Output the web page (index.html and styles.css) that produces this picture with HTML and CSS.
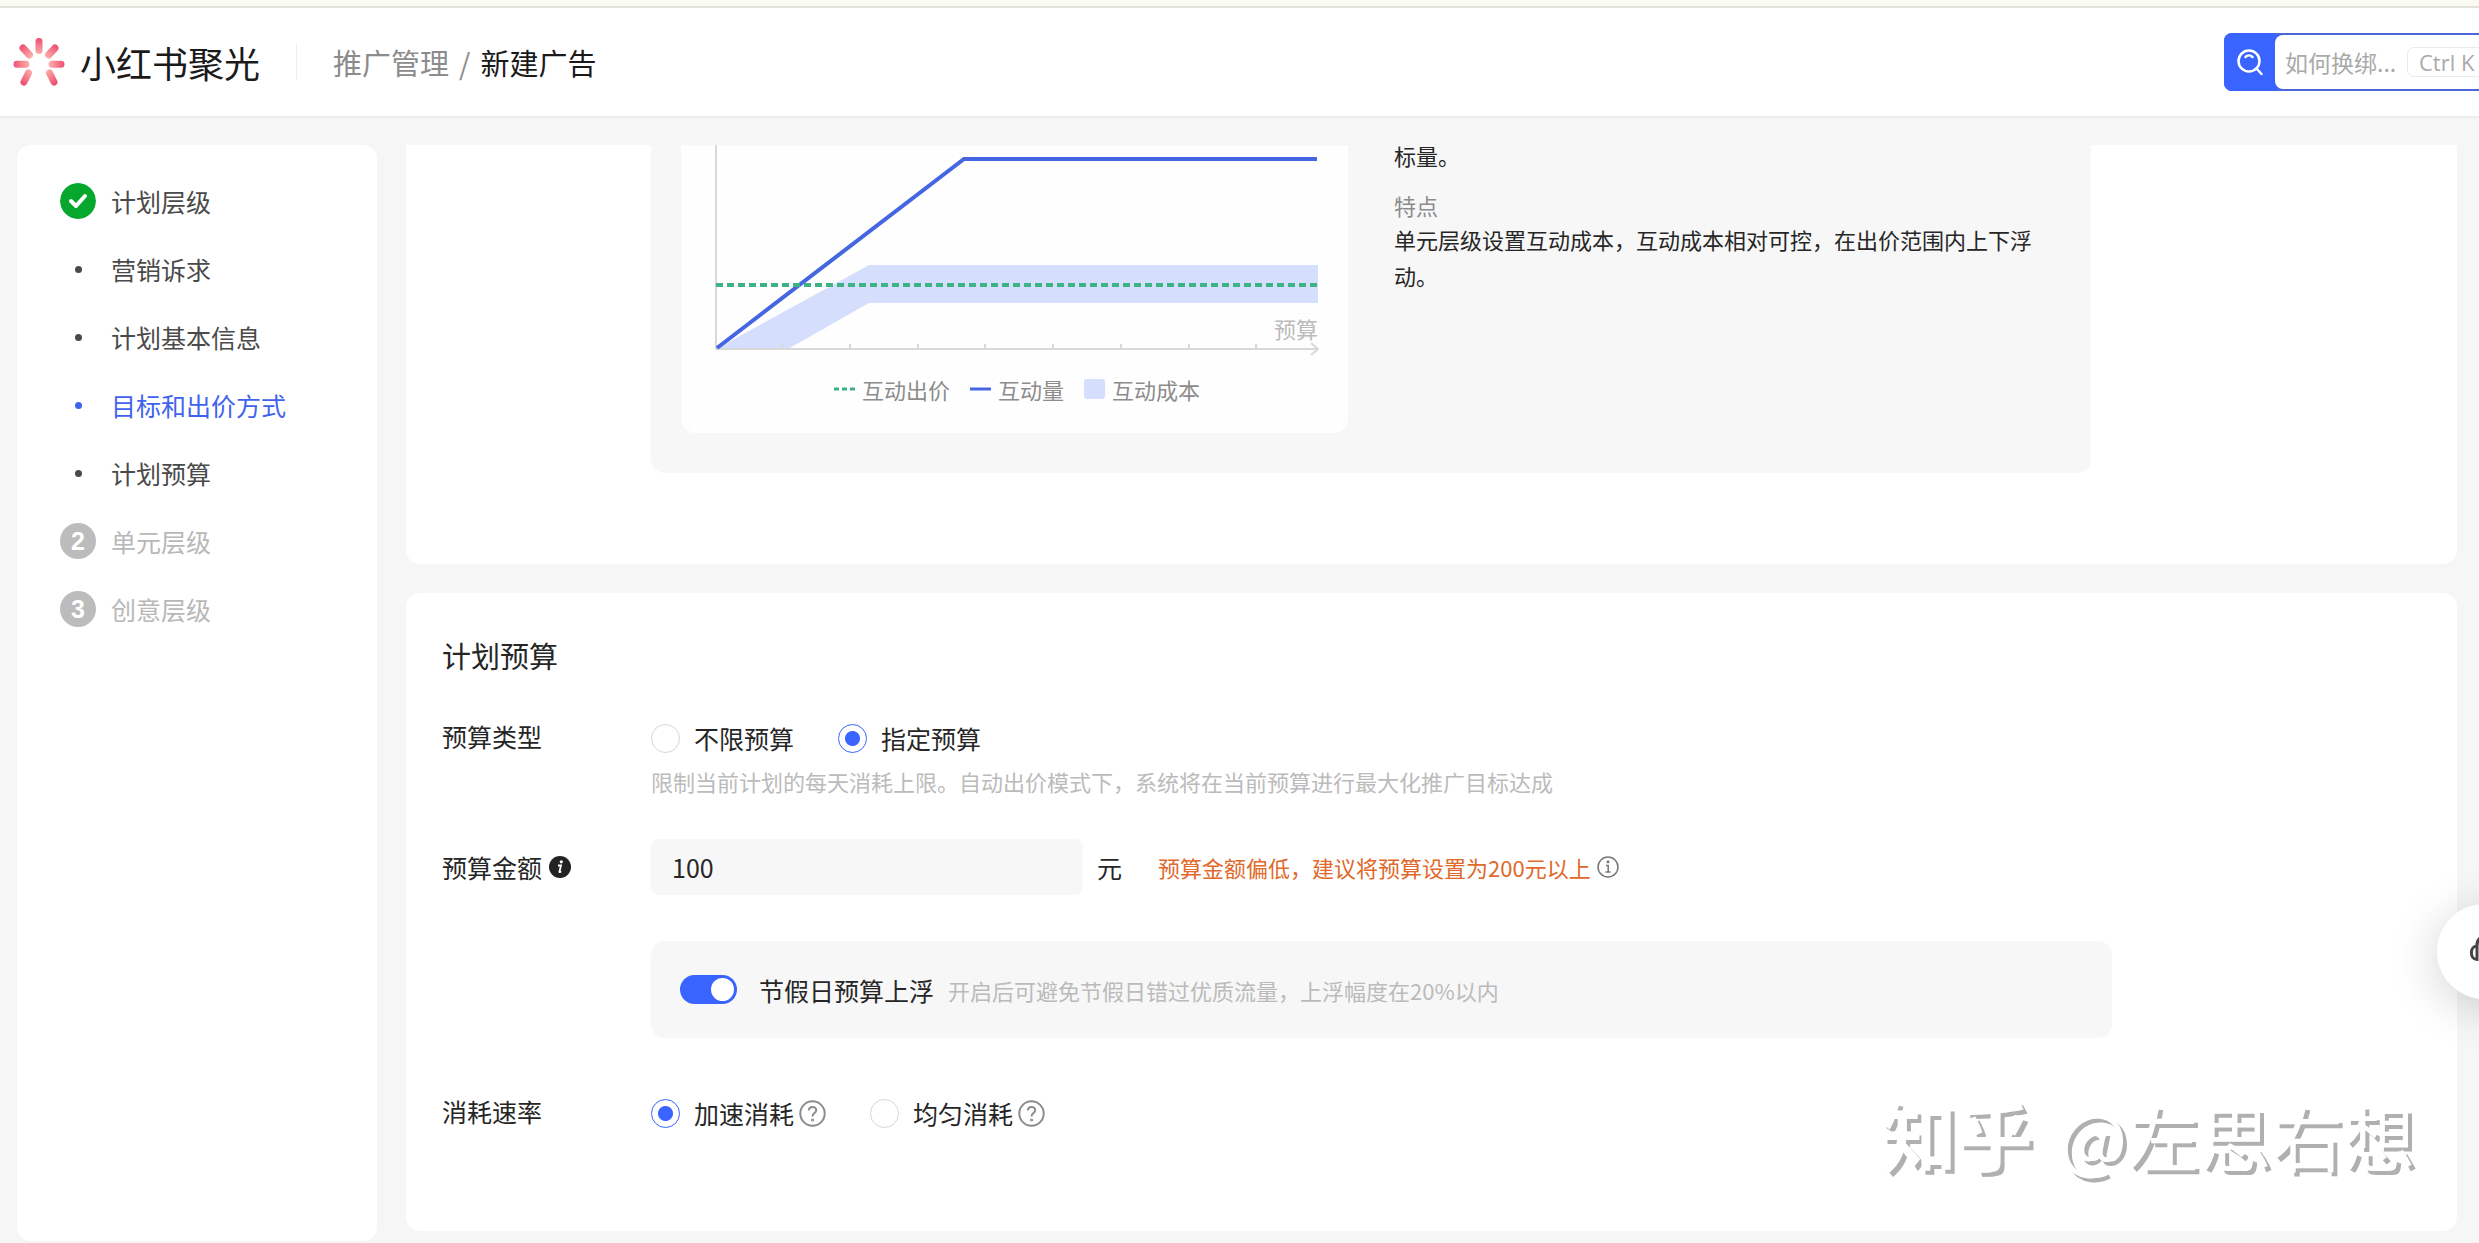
FILE: index.html
```html
<!DOCTYPE html>
<html lang="zh-CN">
<head>
<meta charset="utf-8">
<meta name="viewport" content="width=device-width, initial-scale=1">
<title>新建广告</title>
<link rel="stylesheet" href="styles.css">
</head>
<body>
<div class="topstrip"></div>
<header class="header">
  <a class="brand" href="#">
    <svg class="brand-logo" viewBox="0 0 52 50" aria-hidden="true">
      <defs>
        <radialGradient id="petal" gradientUnits="userSpaceOnUse" cx="26" cy="27" r="27">
          <stop offset="0.35" stop-color="#fbb5ae"/>
          <stop offset="0.95" stop-color="#ef4f72"/>
        </radialGradient>
      </defs>
      <g stroke="url(#petal)" stroke-width="7" stroke-linecap="round">
        <path d="M26 4.5 26.01 13.5M10 11l6.5 7M42 11l-6.5 7M4 27.3l9 .01M48 27.3l-9 .01M11 45l4.5-9M41 45l-4.5-9"/>
      </g>
    </svg>
    <span class="brand-name">小红书聚光</span>
  </a>
  <nav class="crumbs" aria-label="路径">
    <a href="#">推广管理</a><span>/</span><span class="current">新建广告</span>
  </nav>
  <form class="search">
    <button class="search-btn" type="button" aria-label="搜索">
      <svg viewBox="0 0 28 28" fill="none" stroke="#fff" stroke-width="2.5" stroke-linecap="round" aria-hidden="true">
        <circle cx="13" cy="13" r="10.5"/><path d="M20.5 20.5 25.5 26M9.5 9c2-2 5-2 7 0"/>
      </svg>
    </button>
    <input class="search-input" type="text" aria-label="搜索" placeholder="如何换绑...">
    <kbd>Ctrl K</kbd>
  </form>
</header>

<div class="layout">
  <aside class="sidebar">
    <ul class="steps">
      <li><span class="mark"><svg class="badge" viewBox="0 0 36 36" aria-hidden="true"><circle cx="18" cy="18" r="18" fill="#05a82c"/><path d="M11 18l5 5 9-10" fill="none" stroke="#fff" stroke-width="4" stroke-linecap="round" stroke-linejoin="round"/></svg></span><a href="#">计划层级</a></li>
      <li><span class="mark"><i class="dot"></i></span><a href="#">营销诉求</a></li>
      <li><span class="mark"><i class="dot"></i></span><a href="#">计划基本信息</a></li>
      <li class="active"><span class="mark"><i class="dot"></i></span><a href="#">目标和出价方式</a></li>
      <li><span class="mark"><i class="dot"></i></span><a href="#">计划预算</a></li>
      <li class="pending"><span class="mark"><b class="badge num">2</b></span><a href="#">单元层级</a></li>
      <li class="pending"><span class="mark"><b class="badge num">3</b></span><a href="#">创意层级</a></li>
    </ul>
  </aside>

  <main class="main">
    <section class="card bidding">
      <div class="explain">
        <figure class="chart">
          <svg class="plot" viewBox="0 0 604 212" aria-hidden="true">
            <path d="M1 204 154 120H603V158H154L73 204Z" fill="#d5dffd"/>
            <path d="M1 0V204H602M67 199v5M135 199v5M203 199v5M270 199v5M338 199v5M406 199v5M474 199v5M541 199v5M596 198l7 6-7 6" fill="none" stroke="#d8d8d8" stroke-width="2"/>
            <path d="M2 203 249 14H602" fill="none" stroke="#4466e2" stroke-width="4"/>
            <path d="M1 140H603" stroke="#3db283" stroke-width="4" stroke-dasharray="7 4"/>
            <text x="603" y="193" text-anchor="end" class="axis-name">预算</text>
          </svg>
          <figcaption class="legend">
            <span><svg viewBox="0 0 21 20"><path d="M0 10H21" stroke="#3db283" stroke-width="3" stroke-dasharray="5 3"/></svg>互动出价</span>
            <span><svg viewBox="0 0 21 20"><path d="M0 10H21" stroke="#4466e2" stroke-width="3"/></svg>互动量</span>
            <span><svg viewBox="0 0 21 20"><rect width="21" height="20" rx="3" fill="#d5dffd"/></svg>互动成本</span>
          </figcaption>
        </figure>
        <div class="notes">
          <p class="goal">标量。</p>
          <h3>特点</h3>
          <p>单元层级设置互动成本，互动成本相对可控，在出价范围内上下浮动。</p>
        </div>
      </div>
    </section>

    <section class="card budget">
      <h2>计划预算</h2>
      <div class="row" role="radiogroup" aria-labelledby="type-label">
        <span class="label" id="type-label">预算类型</span>
        <div class="field">
          <div class="options">
            <label class="option"><input type="radio" name="type">不限预算</label>
            <label class="option"><input type="radio" name="type" checked>指定预算</label>
          </div>
          <p class="hint">限制当前计划的每天消耗上限。自动出价模式下，系统将在当前预算进行最大化推广目标达成</p>
        </div>
      </div>
      <div class="row amount">
        <label class="label" for="amount">预算金额<svg class="info" viewBox="0 0 22 22" aria-hidden="true"><circle cx="11" cy="11" r="11" fill="#222"/><circle cx="12.3" cy="5.8" r="1.6" fill="#fff"/><path d="M9 9.5h3l-1.6 6.2c-.1.7.6.7 1.8-.3" fill="none" stroke="#fff" stroke-width="1.8"/></svg></label>
        <div class="field inline">
          <input class="amount-input" id="amount" type="text" value="100">
          <span class="unit">元</span>
          <span class="warning">预算金额偏低，建议将预算设置为200元以上</span>
          <svg class="tip" viewBox="0 0 22 22" fill="none" stroke="#777" stroke-width="1.5" aria-hidden="true"><circle cx="11" cy="11" r="10"/><path d="M9 9.5h2.2V16M8.5 16h5"/><circle cx="11" cy="6" r=".7" fill="#777"/></svg>
        </div>
      </div>
      <div class="holiday">
        <input class="switch" id="holiday" type="checkbox" role="switch" checked>
        <label for="holiday">节假日预算上浮</label>
        <span class="hint">开启后可避免节假日错过优质流量，上浮幅度在20%以内</span>
      </div>
      <div class="row" role="radiogroup" aria-labelledby="speed-label">
        <span class="label" id="speed-label">消耗速率</span>
        <div class="options">
          <label class="option"><input type="radio" name="speed" checked>加速消耗<svg class="help" viewBox="0 0 27 27" aria-hidden="true"><circle cx="13.5" cy="13.5" r="12.2"/><path d="M9.8 10.6c0-5 7.6-4.8 7.4-.2-.1 2.7-3.7 2.8-3.7 6"/><circle cx="13.5" cy="20" r=".6"/></svg></label>
          <label class="option"><input type="radio" name="speed">均匀消耗<svg class="help" viewBox="0 0 27 27" aria-hidden="true"><circle cx="13.5" cy="13.5" r="12.2"/><path d="M9.8 10.6c0-5 7.6-4.8 7.4-.2-.1 2.7-3.7 2.8-3.7 6"/><circle cx="13.5" cy="20" r=".6"/></svg></label>
        </div>
      </div>
    </section>
  </main>
</div>

<button class="service" type="button" aria-label="客服">
  <svg viewBox="0 0 36 36" fill="none" stroke="#444" stroke-width="3" aria-hidden="true"><path d="M10 12v13.500c-7.500 0-7.500-13.500 0-13.500C9-1 27-1 26 12v13.500c7.500 0 7.500-13.500 0-13.500"/></svg>
</button>
<div class="watermark"><b>知乎</b> @左思右想</div>
</body>
</html>
```
FILE: styles.css
```css
* { box-sizing: border-box; margin: 0; padding: 0; }

body {
  min-height: 100vh;
  display: flex;
  flex-direction: column;
  overflow: hidden;
  background: #f6f6f6;
  color: #262626;
  font: 25px/36px "Noto Sans CJK SC", sans-serif;
}
input, button, kbd { font: inherit; color: inherit; border: 0; }
a { color: inherit; text-decoration: none; }
ul { list-style: none; }
svg { display: block; flex: none; }

.topstrip { height: 8px; background: #fafaf0; border-bottom: 2px solid #e1e4d9; }

/* Header */
.header {
  height: 110px;
  display: flex;
  align-items: center;
  padding-left: 13px;
  background: #fff;
  border-bottom: 2px solid #ededed;
  overflow: hidden;
}
.brand { display: flex; align-items: center; gap: 15px; padding-right: 36px; }
.brand-logo { width: 52px; height: 50px; }
.brand-name { font-size: 36px; color: #1a1a1a; }
.crumbs {
  display: flex;
  gap: 10px;
  align-items: center;
  border-left: 1px solid #eee;
  padding-left: 36px;
  font-size: 29px;
  color: #8c8c8c;
}
.crumbs .current { color: #1a1a1a; }
.search {
  display: flex;
  flex: none;
  align-items: center;
  width: 310px;
  height: 58px;
  margin: 0 -55px 0 auto;
  border: 2px solid #4c68d8;
  border-left: 0;
  border-radius: 8px;
  background: linear-gradient(90deg, #3a64ff 60px, #fff 60px);
}
.search-btn {
  width: 51px;
  height: 58px;
  margin: -2px 0;
  flex: none;
  display: grid;
  place-items: center;
  border-radius: 8px 0 0 8px;
  background: #3a64ff;
}
.search-btn svg { width: 28px; height: 28px; }
.search-input {
  width: 132px;
  height: 54px;
  padding-left: 10px;
  border-radius: 8px 0 0 8px;
  background: #fff;
  font-size: 23px;
  outline: 0;
}
.search-input::placeholder { color: #aaa; }
kbd {
  height: 30px;
  padding: 0 11px;
  border: 1px solid #eaeaea;
  border-radius: 7px;
  font: 22px/28px "Open Sans", sans-serif;
  color: #aaa;
  white-space: nowrap;
}

/* Page */
.layout {
  flex: 1;
  display: flex;
  gap: 29px;
  padding: 27px 22px 2px 17px;
}
.sidebar { flex: none; width: 360px; padding: 22px 43px; background: #fff; border-radius: 14px; }
.steps li { display: flex; align-items: center; gap: 15px; height: 68px; color: #4a4a4a; }
.mark { width: 36px; display: grid; place-items: center; }
.badge { width: 36px; height: 36px; border-radius: 50%; }
.num { background: #bcbcbc; color: #fff; text-align: center; font: bold 25px/36px "Liberation Sans", sans-serif; }
.dot { width: 7px; height: 7px; border-radius: 50%; background: currentColor; }
.steps .active { color: #3f63ee; }
.steps .pending { color: #b8b8b8; }

.main { flex: 1; min-width: 0; padding-bottom: 9px; display: flex; flex-direction: column; gap: 29px; }
.card { background: #fff; border-radius: 14px; }

/* Bid explanation, scrolled under the header */
.bidding { border-radius: 0 0 14px 14px; padding: 0 36px 91px 245px; }
.explain {
  max-width: 1440px;
  display: flex;
  gap: 46px;
  padding: 0 30px 40px;
  background: #f7f7f7;
  border-radius: 0 0 14px 14px;
}
.chart {
  flex: none;
  width: 667px;
  padding: 0 29px 26px 34px;
  border-radius: 0 0 14px 14px;
  background: repeating-linear-gradient(90deg, #fcfcfc 0 1px, transparent 1px 8px), repeating-linear-gradient(#fcfcfc 0 1px, #fff 1px 8px);
}
.plot { width: 604px; height: 212px; }
.axis-name { font-size: 22px; fill: #bbb; }
.legend {
  display: flex;
  justify-content: center;
  gap: 20px;
  margin-top: 14px;
  font-size: 22px;
  color: #8c8c8c;
}
.legend span { display: flex; align-items: center; gap: 7px; }
.legend svg { width: 21px; height: 20px; }
.notes { max-width: 640px; font-size: 22px; }
.notes .goal { line-height: 20px; }
.notes h3 { margin-top: 24px; font: inherit; line-height: 32px; color: #8c8c8c; }

/* Budget form */
.budget { padding: 42px 36px 100px; }
.budget h2 { margin-bottom: 45px; font-size: 29px; line-height: 40px; font-weight: 400; }
.row { display: grid; grid-template-columns: 209px 1fr; }
.label { line-height: 32px; }
.options { display: flex; align-items: center; gap: 44px; }
.option { display: flex; align-items: center; }
.option input {
  appearance: none;
  width: 29px;
  height: 29px;
  margin-right: 14px;
  border: 1px solid #d6d6d6;
  border-radius: 50%;
  background: #fff;
}
.option input:checked { border-color: #3a64ff; background: radial-gradient(circle, #3a64ff 7px, #fff 8px); }
.hint { font-size: 22px; color: #bbb; white-space: nowrap; }
.field .hint { margin-top: 10px; line-height: 30px; }
.amount { margin-top: 43px; align-items: center; }
.amount .label { display: flex; align-items: center; gap: 7px; }
.info { width: 22px; height: 22px; }
.inline { display: flex; align-items: center; }
.amount-input {
  width: 432px;
  height: 56px;
  padding: 0 21px;
  border-radius: 8px;
  background: #f7f7f7;
  outline: 0;
}
.unit { margin: 0 36px 0 14px; }
.warning { font-size: 22px; color: #e0692b; white-space: nowrap; }
.tip { width: 22px; height: 22px; margin-left: 6px; }
.holiday {
  max-width: 1461px;
  height: 97px;
  margin: 46px 0 57px 209px;
  padding: 0 29px;
  display: flex;
  align-items: center;
  border-radius: 14px;
  background: #f7f7f7;
}
.switch {
  appearance: none;
  width: 57px;
  height: 29px;
  margin-right: 22px;
  padding: 3px;
  border-radius: 15px;
  background: #3a64ff;
}
.switch::before {
  content: "";
  display: block;
  width: 23px;
  height: 23px;
  margin-left: auto;
  border-radius: 50%;
  background: #fff;
}
.holiday .hint { margin-left: 14px; }
.help { width: 27px; height: 27px; margin-left: 5px; fill: none; stroke: #8c8c8c; stroke-width: 2; }

/* Overlays */
.service {
  position: fixed;
  right: -53px;
  top: 904px;
  width: 95px;
  height: 95px;
  display: grid;
  place-items: center;
  border-radius: 50%;
  background: #fff;
  box-shadow: 0 8px 48px rgba(0, 0, 0, .18);
}
.service svg { width: 36px; height: 36px; }
.watermark {
  position: fixed;
  right: 64px;
  bottom: 72px;
  font-size: 72px;
  line-height: 72px;
  color: #fff;
  text-shadow: 4px 4px 0 #b0b0b0;
  white-space: nowrap;
}
.watermark b { margin-right: 10px; font-size: 76px; }
```
